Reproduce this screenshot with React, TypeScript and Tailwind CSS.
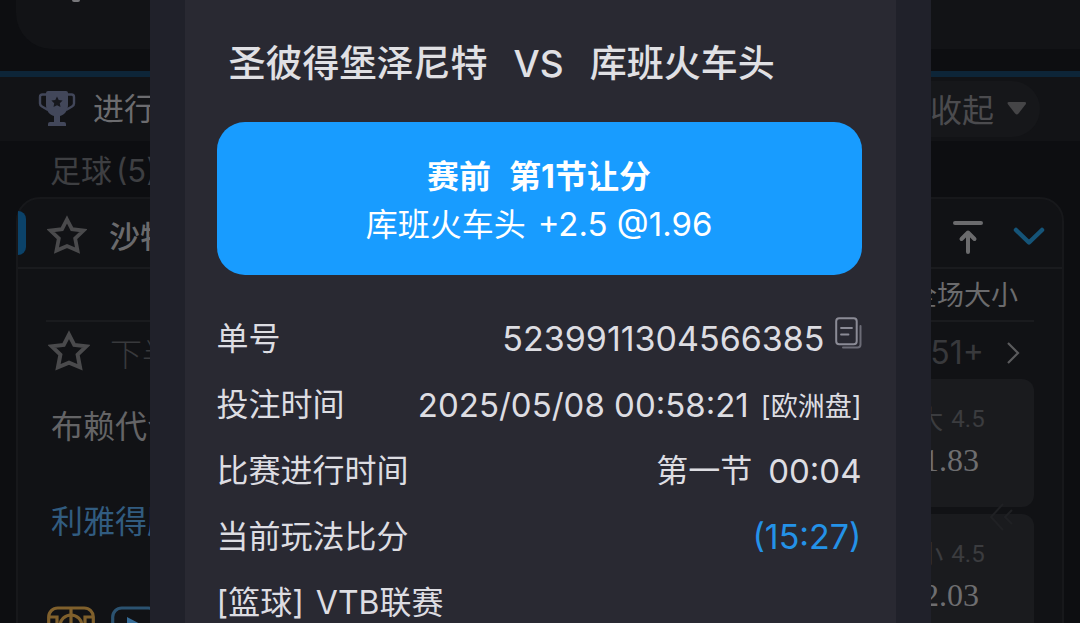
import React from "react";

function Trophy() {
  return (
    <svg width="38" height="38" viewBox="0 0 38 38" fill="none" aria-hidden="true">
      <path d="M9 4.500H4.500q-2.500 0-2.500 2.500v6.500q0 2 2 3L10 20M29 4.500h4.500q2.500 0 2.500 2.500v6.500q0 2-2 3L28 20" stroke="#42475a" strokeWidth="2.400" />
      <path d="M8 3q0-2 2-2h18q2 0 2 2v12c0 6-4 10-8 11v6h4q2 0 2 2v2H10v-2q0-2 2-2h4v-6c-4-1-8-5-8-11z" fill="#42475a" />
      <path d="M19 6.500l1.700 3.500 3.900.5-2.800 2.700.7 3.800-3.500-1.800-3.500 1.800.7-3.800-2.800-2.700 3.900-.5z" fill="#17181e" />
    </svg>
  );
}

function Star({ size }: { size: number }) {
  return (
    <svg width={size} height={size} viewBox="0 0 40 40" fill="none" aria-hidden="true">
      <path
        d="M20 4.500l5 9.700 11.500 1.300-8.300 8 2.300 12-10.500-4.500-10.500 4.500 2.300-12-8.300-8 11.500-1.300z"
        stroke="#4a4a4c"
        strokeWidth="3.800"
      />
    </svg>
  );
}

function CopyIcon() {
  return (
    <svg width="27" height="32" viewBox="0 0 27 32" fill="none" aria-hidden="true">
      <rect x="1.200" y="1.200" width="20.500" height="26" rx="3" stroke="#8b8b96" strokeWidth="2" />
      <path d="M6 11h11M6 17.500h7.500" stroke="#8b8b96" strokeWidth="1.800" strokeLinecap="round" />
      <path d="M25.500 9v18.500a3 3 0 0 1-3 3H8" stroke="#6c6c77" strokeWidth="2" strokeLinecap="round" />
    </svg>
  );
}

function Odds({ side, line, price }: { side: string; line: string; price: string }) {
  return (
    <button className="flex h-32 w-[166px] flex-col items-center rounded-xl bg-[#1a1b1e] pt-5">
      <span className="flex h-10 items-center gap-2 text-[26px] text-[#3b3c3f]">
        <span>{side}</span>
        <span className="font-['Roboto',sans-serif] text-[24px]">{line}</span>
      </span>
      <span className="font-['Liberation_Serif',serif] text-[32px] leading-[42px] text-[#6e6e70]">{price}</span>
    </button>
  );
}

function MatchPage() {
  return (
    <main className="flex flex-col bg-[#0d0e11]">
      <section className="ml-4 h-[49px] rounded-bl-[36px] bg-[#121316]">
        <div className="ml-14 h-0.5 w-2 rounded-b-full bg-[#77777a]" />
      </section>
      <header className="mt-[22px] flex h-[70px] items-center border-t-[6px] border-[#0d2538] bg-[#121316] pr-10 pl-[38px]">
        <Trophy />
        <h1 className="ml-[17px] text-[31px] text-[#6c6c6f]">进行中</h1>
        <button className="ml-auto flex h-14 w-[160px] items-center justify-end gap-3 rounded-full bg-[#16171a] pr-3 text-[32px] text-[#4b4b4e]">
          <span className="pt-1">收起</span>
          <svg width="22" height="18" viewBox="0 0 22 18" aria-hidden="true">
            <path d="M3 2h15.500q2.500 0 1 2.500l-7 9q-1.700 2-3.400 0l-7-9Q.5 2 3 2z" fill="#454547" />
          </svg>
        </button>
      </header>
      <h2 className="flex h-14 items-center gap-1 pt-1 pl-[50px] text-[31px] text-[#3e3f42]">
        <span>足球</span>
        <span className="text-[31px]">(5)</span>
      </h2>
      <section className="mx-4 h-[520px] rounded-3xl border-2 border-[#17181b] bg-[#111215]">
        <div className="flex h-[70px] items-center border-b-2 border-[#1a1b1e]">
          <span className="h-11 w-2 rounded-r-lg bg-[#0b4269]" />
          <button aria-label="收藏联赛" className="ml-[21px] pt-1">
            <Star size={40} />
          </button>
          <h3 className="ml-[22px] pt-2 text-[31px] font-medium text-[#6a6a6c]">沙特联赛</h3>
          <button aria-label="置顶" className="ml-auto pt-2">
            <svg width="32" height="36" viewBox="0 0 32 36" fill="none" stroke="#6b6b6d" strokeWidth="4" strokeLinecap="round" strokeLinejoin="round" aria-hidden="true">
              <path d="M3 4h26M16 13.500V33M9.500 20L16 13.500l6.500 6.500" />
            </svg>
          </button>
          <button aria-label="折叠" className="mr-4 ml-7 pt-2">
            <svg width="34" height="22" viewBox="0 0 34 22" fill="none" stroke="#155478" strokeWidth="4.500" strokeLinecap="round" strokeLinejoin="round" aria-hidden="true">
              <path d="M4 4l13 12.500L30 4" />
            </svg>
          </button>
        </div>
        <div className="mr-7 ml-7">
          <div className="flex h-[53px] items-center justify-end border-b-2 border-[#1a1b1e] pt-1 pr-4 text-[27px] text-[#6b6b6d]">
            全场大小
          </div>
          <div className="flex h-[57px] items-center pt-1 pr-3 text-[#38393c]">
            <button aria-label="收藏比赛" className="ml-0.5 pb-1">
              <Star size={42} />
            </button>
            <span className="ml-5 pt-1 text-[32px] font-light">下半场</span>
            <a href="#more" className="ml-auto flex items-center gap-5 text-[32px]">
              <span>51+</span>
              <svg width="18" height="26" viewBox="0 0 18 26" fill="none" stroke="#5b5b5d" strokeWidth="2.200" aria-hidden="true">
                <path d="M4 3l10 10L4 23" />
              </svg>
            </a>
          </div>
          <div className="flex justify-between">
            <div className="pl-[5px]">
              <div className="flex h-[95px] items-center text-[32px] text-[#646466]">布赖代合作</div>
              <div className="flex h-[95px] items-center text-[32px] text-[#315c80]">利雅得胜利</div>
              <div className="mt-[37px] -ml-1 flex gap-4">
                <svg width="48" height="40" viewBox="0 0 48 40" fill="none" stroke="#80602c" strokeWidth="3.200" aria-hidden="true">
                  <rect x="1.700" y="2" width="44.600" height="36" rx="9" />
                  <path d="M24 2v36M2 11h8v20H2M46 11h-8v20h8" />
                  <circle cx="24" cy="20" r="11" />
                </svg>
                <svg width="48" height="40" viewBox="0 0 48 40" fill="none" aria-hidden="true">
                  <rect x="1.700" y="2" width="44.600" height="36" rx="9" stroke="#2b5270" strokeWidth="3.200" />
                  <path d="M16 11l17 9-17 9z" fill="#376d98" />
                </svg>
              </div>
            </div>
            <div className="relative flex flex-col gap-[7px]">
              <Odds side="大" line="4.5" price="1.83" />
              <Odds side="小" line="4.5" price="2.03" />
              <svg className="absolute top-[122px] right-5" width="26" height="32" viewBox="0 0 26 32" fill="none" stroke="#202124" strokeWidth="2" aria-hidden="true">
                <path d="M15 3L3 16l12 13M24 9l-7 7 7 7" />
              </svg>
            </div>
          </div>
        </div>
      </section>
    </main>
  );
}

function Row({ label, children }: { label: React.ReactNode; children?: React.ReactNode }) {
  return (
    <div className="flex h-[66px] items-center justify-between">
      <dt className="flex gap-3">{label}</dt>
      <dd className="flex items-center leading-10">{children}</dd>
    </div>
  );
}

function BetDialog() {
  return (
    <div role="dialog" aria-labelledby="match" className="h-full w-full max-w-[781px] bg-[#20212a] px-[35px]">
      <div className="h-full bg-[#292932] pt-9 pr-[34px] pl-8 text-[32px] text-[#dddde2]">
        <h2 id="match" className="flex h-14 items-center gap-[26px] pl-3 text-[37px] font-medium text-[#e0e0e4]">
          <span>圣彼得堡泽尼特</span>
          <span>VS</span>
          <span>库班火车头</span>
        </h2>
        <div className="mt-[30px] flex h-[153px] flex-col items-center justify-center rounded-[28px] bg-[#189cff] pt-1 text-white">
          <p className="flex h-12 items-center gap-[18px] font-bold">
            <span>赛前</span>
            <span>第1节让分</span>
          </p>
          <p className="flex h-12 items-center gap-3">
            <span>库班火车头</span>
            <span className="text-[33px]">+2.5 @1.96</span>
          </p>
        </div>
        <dl className="mt-[31px]">
          <Row label="单号">
            <span className="text-[34px]">5239911304566385</span>
            <button aria-label="复制单号" className="mb-3 ml-2.5">
              <CopyIcon />
            </button>
          </Row>
          <Row label="投注时间">
            <time dateTime="2025-05-08T00:58:21" className="text-[33px]">2025/05/08 00:58:21</time>
            <span className="ml-3 pt-1 text-[27px]">[欧洲盘]</span>
          </Row>
          <Row label="比赛进行时间">
            <span>第一节</span>
            <span className="ml-4 text-[33px]">00:04</span>
          </Row>
          <Row label="当前玩法比分">
            <span className="text-[34px] text-[#2492e8]">(15:27)</span>
          </Row>
          <Row
            label={
              <>
                <span>[篮球]</span>
                <span>VTB联赛</span>
              </>
            }
          />
        </dl>
      </div>
    </div>
  );
}

export default function App() {
  return (
    <div className="relative h-screen overflow-hidden bg-[#0d0e11] font-['Inter','Noto_Sans_CJK_SC',sans-serif] whitespace-nowrap">
      <MatchPage />
      <div className="absolute inset-0 flex justify-center overflow-hidden">
        <BetDialog />
      </div>
    </div>
  );
}
